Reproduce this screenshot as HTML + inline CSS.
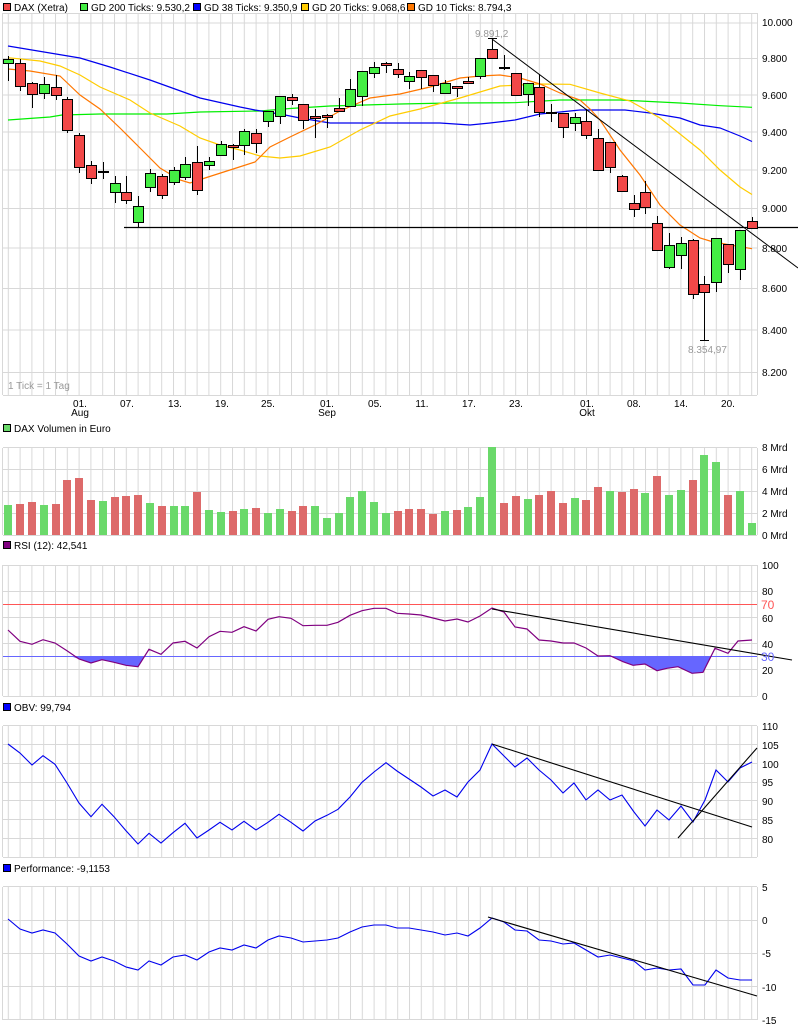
<!DOCTYPE html>
<html><head><meta charset="utf-8"><style>
html,body{margin:0;padding:0;background:#fff;}
svg{display:block;}
text{font-family:"Liberation Sans","DejaVu Sans",sans-serif;font-size:10px;fill:#000;}
.g line{stroke:#d8d8d8;stroke-width:1;}
.w{stroke:#000;stroke-width:1;}
.r{fill:#f24848;stroke:#000;stroke-width:1;}
.u{fill:#44ee44;stroke:#000;stroke-width:1;}
.vr{fill:#dd6a6a;}
.vg{fill:#6ad96a;}
</style></head><body>
<svg width="798" height="1028" viewBox="0 0 798 1028" xmlns="http://www.w3.org/2000/svg">
<defs>
<pattern id="vg" patternUnits="userSpaceOnUse" width="11.8" height="20" x="7.8" y="0">
<line x1="0.5" y1="0" x2="0.5" y2="20" stroke="#d8d8d8" stroke-width="1"/>
</pattern>
</defs>

<rect x="3.5" y="3.5" width="7" height="7" fill="#f24848" stroke="#000"/><text x="14" y="11">DAX (Xetra)</text>
<rect x="80.5" y="3.5" width="7" height="7" fill="#44ee44" stroke="#000"/><text x="91" y="11">GD 200 Ticks: 9.530,2</text>
<rect x="193.5" y="3.5" width="7" height="7" fill="#0000ff" stroke="#000"/><text x="204" y="11">GD 38 Ticks: 9.350,9</text>
<rect x="301.5" y="3.5" width="7" height="7" fill="#ffcc00" stroke="#000"/><text x="312" y="11">GD 20 Ticks: 9.068,6</text>
<rect x="407.5" y="3.5" width="7" height="7" fill="#ff7700" stroke="#000"/><text x="418" y="11">GD 10 Ticks: 8.794,3</text>

<rect x="3" y="13" width="754" height="382" fill="url(#vg)"/>
<g class="g" shape-rendering="crispEdges">
<line x1="2.5" y1="13" x2="2.5" y2="395"/><line x1="757.5" y1="13" x2="757.5" y2="395"/>
<line x1="3" y1="13.5" x2="757" y2="13.5"/>
<line x1="3" y1="23" x2="757" y2="23"/><line x1="3" y1="58.5" x2="757" y2="58.5"/>
<line x1="3" y1="95" x2="757" y2="95"/><line x1="3" y1="132" x2="757" y2="132"/>
<line x1="3" y1="170" x2="757" y2="170"/><line x1="3" y1="208.5" x2="757" y2="208.5"/>
<line x1="3" y1="248" x2="757" y2="248"/><line x1="3" y1="288.5" x2="757" y2="288.5"/>
<line x1="3" y1="330" x2="757" y2="330"/><line x1="3" y1="372.5" x2="757" y2="372.5"/>
<line x1="3" y1="395.5" x2="757" y2="395.5"/>
</g>
<g>
<text x="762" y="26">10.000</text><text x="762" y="62">9.800</text><text x="762" y="99">9.600</text>
<text x="762" y="136">9.400</text><text x="762" y="174">9.200</text><text x="762" y="212">9.000</text>
<text x="762" y="252">8.800</text><text x="762" y="292">8.600</text><text x="762" y="334">8.400</text>
<text x="762" y="376">8.200</text>
</g>
<text x="8" y="389" style="fill:#999">1 Tick = 1 Tag</text>
<g text-anchor="middle">
<text x="80" y="407">01.</text><text x="80" y="416">Aug</text>
<text x="127" y="407">07.</text><text x="175" y="407">13.</text><text x="222" y="407">19.</text>
<text x="268" y="407">25.</text><text x="327" y="407">01.</text><text x="327" y="416">Sep</text>
<text x="375" y="407">05.</text><text x="422" y="407">11.</text><text x="469" y="407">17.</text>
<text x="516" y="407">23.</text><text x="587" y="407">01.</text><text x="587" y="416">Okt</text>
<text x="634" y="407">08.</text><text x="681" y="407">14.</text><text x="728" y="407">20.</text>
</g>

<g fill="none" stroke-width="1.2">
<polyline stroke="#00ee00" points="8,120 50,117 62,115 100,114 167,114 200,112 260,111 290,108.5 330,106 400,104 450,103 515,102.7 560,100 620,100 680,103 720,105.7 752,107.3"/>
<polyline stroke="#0000ee" points="8,46 50,53 80,58 110,67 150,80 200,98 240,107 255,110 285,115 300,118 330,123 400,123 440,123 470,125 490,123 515,120 540,114 580,110 625,110 650,113 680,118 700,125 720,128 740,136 752,141.5"/>
<polyline stroke="#ffcc00" points="8,57.7 40,61 60,66 80,75 100,87 130,100 150,113 180,126 200,138 220,145 240,150 260,156 280,158 300,156 330,147 360,130 390,116 420,109 460,98 500,86 520,85 540,84 570,84.3 600,93 630,101 660,118 700,150 720,170 740,187 752,194.5"/>
<polyline stroke="#ff7700" points="8,69 30,71 60,76 80,95 100,109 120,128 140,148 160,168 180,180 190,183 205,178 230,170 255,162 270,147 290,137 315,125 340,111 370,98 400,94 430,87 460,78 480,76 500,75 520,78 540,84 560,93 580,100 590,109 600,120 620,150 640,175 660,205 680,225 700,238 710,241 730,245 752,248.7"/>
</g>
<line x1="124" y1="227.5" x2="798" y2="227.5" stroke="#000" stroke-width="1.2"/>
<line x1="492" y1="39" x2="798" y2="268" stroke="#000" stroke-width="1"/>

<g>
<line class="w" x1="8.5" y1="56" x2="8.5" y2="81"/><rect class="u" x="3.5" y="59.5" width="10" height="4"/>
<line class="w" x1="20.5" y1="59" x2="20.5" y2="91"/><rect class="r" x="15.5" y="63.5" width="10" height="23"/>
<line class="w" x1="32.5" y1="82" x2="32.5" y2="108"/><rect class="r" x="27.5" y="83.5" width="10" height="11"/>
<line class="w" x1="44.5" y1="77" x2="44.5" y2="99"/><rect class="u" x="39.5" y="84.5" width="10" height="9"/>
<line class="w" x1="56.5" y1="75" x2="56.5" y2="100"/><rect class="r" x="51.5" y="87.5" width="10" height="8"/>
<line class="w" x1="67.5" y1="97" x2="67.5" y2="133"/><rect class="r" x="62.5" y="99.5" width="10" height="31"/>
<line class="w" x1="79.5" y1="133" x2="79.5" y2="173"/><rect class="r" x="74.5" y="135.5" width="10" height="32"/>
<line class="w" x1="91.5" y1="161" x2="91.5" y2="184"/><rect class="r" x="86.5" y="165.5" width="10" height="13"/>
<line class="w" x1="103.5" y1="162" x2="103.5" y2="179"/><rect x="98" y="171" width="11" height="2" fill="#000"/>
<line class="w" x1="115.5" y1="176" x2="115.5" y2="203"/><rect class="u" x="110.5" y="183.5" width="10" height="9"/>
<line class="w" x1="126.5" y1="176" x2="126.5" y2="204"/><rect class="r" x="121.5" y="192.5" width="10" height="8"/>
<line class="w" x1="138.5" y1="196" x2="138.5" y2="227"/><rect class="u" x="133.5" y="206.5" width="10" height="16"/>
<line class="w" x1="150.5" y1="169" x2="150.5" y2="192"/><rect class="u" x="145.5" y="173.5" width="10" height="14"/>
<line class="w" x1="162.5" y1="174" x2="162.5" y2="199"/><rect class="r" x="157.5" y="176.5" width="10" height="19"/>
<line class="w" x1="174.5" y1="167" x2="174.5" y2="185"/><rect class="u" x="169.5" y="170.5" width="10" height="12"/>
<line class="w" x1="185.5" y1="157" x2="185.5" y2="180"/><rect class="u" x="180.5" y="164.5" width="10" height="13"/>
<line class="w" x1="197.5" y1="146" x2="197.5" y2="195"/><rect class="r" x="192.5" y="162.5" width="10" height="28"/>
<line class="w" x1="209.5" y1="157" x2="209.5" y2="170"/><rect class="u" x="204.5" y="161.5" width="10" height="4"/>
<line class="w" x1="221.5" y1="141" x2="221.5" y2="155"/><rect class="u" x="216.5" y="144.5" width="10" height="11"/>
<line class="w" x1="233.5" y1="144" x2="233.5" y2="160"/><rect class="r" x="228.5" y="145.5" width="10" height="2"/>
<line class="w" x1="244.5" y1="129" x2="244.5" y2="155"/><rect class="u" x="239.5" y="131.5" width="10" height="14"/>
<line class="w" x1="256.5" y1="129" x2="256.5" y2="153"/><rect class="r" x="251.5" y="133.5" width="10" height="10"/>
<line class="w" x1="268.5" y1="111" x2="268.5" y2="127"/><rect class="u" x="263.5" y="111.5" width="10" height="10"/>
<line class="w" x1="280.5" y1="96" x2="280.5" y2="124"/><rect class="u" x="275.5" y="96.5" width="10" height="20"/>
<line class="w" x1="292.5" y1="94" x2="292.5" y2="105"/><rect class="r" x="287.5" y="97.5" width="10" height="3"/>
<line class="w" x1="303.5" y1="104" x2="303.5" y2="129"/><rect class="r" x="298.5" y="104.5" width="10" height="16"/>
<line class="w" x1="315.5" y1="109" x2="315.5" y2="138"/><rect class="r" x="310.5" y="116.5" width="10" height="2"/>
<line class="w" x1="327.5" y1="114" x2="327.5" y2="128"/><rect class="r" x="322.5" y="115.5" width="10" height="2"/>
<line class="w" x1="339.5" y1="98" x2="339.5" y2="111"/><rect class="r" x="334.5" y="108.5" width="10" height="3"/>
<line class="w" x1="350.5" y1="79" x2="350.5" y2="106"/><rect class="u" x="345.5" y="89.5" width="10" height="17"/>
<line class="w" x1="362.5" y1="71" x2="362.5" y2="106"/><rect class="u" x="357.5" y="71.5" width="10" height="25"/>
<line class="w" x1="374.5" y1="62" x2="374.5" y2="78"/><rect class="u" x="369.5" y="67.5" width="10" height="6"/>
<line class="w" x1="386.5" y1="62" x2="386.5" y2="73"/><rect class="r" x="381.5" y="63.5" width="10" height="2"/>
<line class="w" x1="398.5" y1="63" x2="398.5" y2="78"/><rect class="r" x="393.5" y="69.5" width="10" height="5"/>
<line class="w" x1="409.5" y1="72" x2="409.5" y2="89"/><rect class="u" x="404.5" y="76.5" width="10" height="5"/>
<line class="w" x1="421.5" y1="70" x2="421.5" y2="89"/><rect class="r" x="416.5" y="70.5" width="10" height="7"/>
<line class="w" x1="433.5" y1="75" x2="433.5" y2="92"/><rect class="r" x="428.5" y="75.5" width="10" height="10"/>
<line class="w" x1="445.5" y1="80" x2="445.5" y2="93"/><rect class="u" x="440.5" y="83.5" width="10" height="10"/>
<line class="w" x1="457.5" y1="86" x2="457.5" y2="97"/><rect class="r" x="452.5" y="86.5" width="10" height="2"/>
<line class="w" x1="468.5" y1="77" x2="468.5" y2="83"/><rect class="r" x="463.5" y="81.5" width="10" height="2"/>
<line class="w" x1="480.5" y1="58" x2="480.5" y2="79"/><rect class="u" x="475.5" y="58.5" width="10" height="18"/>
<line class="w" x1="492.5" y1="38" x2="492.5" y2="58"/><rect class="r" x="487.5" y="49.5" width="10" height="9"/><line class="w" x1="488" y1="38.5" x2="497" y2="38.5"/>
<line class="w" x1="504.5" y1="55" x2="504.5" y2="70"/><rect x="499" y="67" width="11" height="2" fill="#000"/>
<line class="w" x1="516.5" y1="73" x2="516.5" y2="95"/><rect class="r" x="511.5" y="73.5" width="10" height="22"/>
<line class="w" x1="528.5" y1="83" x2="528.5" y2="106"/><rect class="u" x="523.5" y="83.5" width="10" height="11"/>
<line class="w" x1="539.5" y1="74" x2="539.5" y2="117"/><rect class="r" x="534.5" y="87.5" width="10" height="25"/>
<line class="w" x1="551.5" y1="104" x2="551.5" y2="122"/><rect x="546" y="112" width="11" height="2" fill="#000"/>
<line class="w" x1="563.5" y1="113" x2="563.5" y2="138"/><rect class="r" x="558.5" y="113.5" width="10" height="14"/>
<line class="w" x1="575.5" y1="113" x2="575.5" y2="131"/><rect class="u" x="570.5" y="117.5" width="10" height="6"/>
<line class="w" x1="586.5" y1="109" x2="586.5" y2="139"/><rect class="r" x="581.5" y="121.5" width="10" height="14"/>
<line class="w" x1="598.5" y1="129" x2="598.5" y2="170"/><rect class="r" x="593.5" y="138.5" width="10" height="32"/>
<line class="w" x1="610.5" y1="142" x2="610.5" y2="173"/><rect class="r" x="605.5" y="142.5" width="10" height="25"/>
<line class="w" x1="622.5" y1="175" x2="622.5" y2="192"/><rect class="r" x="617.5" y="176.5" width="10" height="15"/>
<line class="w" x1="634.5" y1="195" x2="634.5" y2="217"/><rect class="r" x="629.5" y="203.5" width="10" height="6"/>
<line class="w" x1="645.5" y1="181" x2="645.5" y2="214"/><rect class="r" x="640.5" y="192.5" width="10" height="15"/>
<line class="w" x1="657.5" y1="216" x2="657.5" y2="250"/><rect class="r" x="652.5" y="223.5" width="10" height="27"/>
<line class="w" x1="669.5" y1="233" x2="669.5" y2="269"/><rect class="u" x="664.5" y="245.5" width="10" height="22"/>
<line class="w" x1="681.5" y1="237" x2="681.5" y2="269"/><rect class="u" x="676.5" y="243.5" width="10" height="12"/>
<line class="w" x1="693.5" y1="239" x2="693.5" y2="299"/><rect class="r" x="688.5" y="240.5" width="10" height="54"/>
<line class="w" x1="704.5" y1="276" x2="704.5" y2="340"/><rect class="r" x="699.5" y="284.5" width="10" height="8"/><line class="w" x1="700" y1="340.5" x2="709" y2="340.5"/>
<line class="w" x1="716.5" y1="238" x2="716.5" y2="292"/><rect class="u" x="711.5" y="238.5" width="10" height="44"/>
<line class="w" x1="728.5" y1="244" x2="728.5" y2="273"/><rect class="r" x="723.5" y="244.5" width="10" height="20"/>
<line class="w" x1="740.5" y1="230" x2="740.5" y2="280"/><rect class="u" x="735.5" y="230.5" width="10" height="39"/>
<line class="w" x1="752.5" y1="217" x2="752.5" y2="228"/><rect class="r" x="747.5" y="221.5" width="10" height="7"/>
</g>
<text x="475" y="37" style="fill:#999">9.891,2</text>
<text x="688" y="353" style="fill:#999">8.354,97</text>

<rect x="3.5" y="424.5" width="7" height="7" fill="#6ad96a" stroke="#000"/><text x="14" y="432">DAX Volumen in Euro</text>
<rect x="3" y="448" width="754" height="87" fill="url(#vg)"/>
<g class="g" shape-rendering="crispEdges">
<line x1="2.5" y1="448" x2="2.5" y2="535"/><line x1="757.5" y1="448" x2="757.5" y2="535"/>
<line x1="3" y1="447.5" x2="757" y2="447.5"/><line x1="3" y1="469.5" x2="757" y2="469.5"/>
<line x1="3" y1="491.5" x2="757" y2="491.5"/><line x1="3" y1="513.5" x2="757" y2="513.5"/>
<line x1="3" y1="535.5" x2="757" y2="535.5"/>
</g>
<g>
<text x="762" y="451">8 Mrd</text><text x="762" y="473">6 Mrd</text><text x="762" y="495">4 Mrd</text>
<text x="762" y="517">2 Mrd</text><text x="762" y="539">0 Mrd</text>
</g>
<g>
<rect class="vg" x="4" y="505" width="8" height="30"/><rect class="vr" x="16" y="504" width="8" height="31"/>
<rect class="vr" x="28" y="502" width="8" height="33"/><rect class="vg" x="40" y="505" width="8" height="30"/>
<rect class="vr" x="52" y="504" width="8" height="31"/><rect class="vr" x="63" y="480" width="8" height="55"/>
<rect class="vr" x="75" y="478" width="8" height="57"/><rect class="vr" x="87" y="500" width="8" height="35"/>
<rect class="vg" x="99" y="501" width="8" height="34"/><rect class="vr" x="111" y="497" width="8" height="38"/>
<rect class="vr" x="122" y="496" width="8" height="39"/><rect class="vr" x="134" y="495" width="8" height="40"/>
<rect class="vg" x="146" y="503" width="8" height="32"/><rect class="vr" x="158" y="506" width="8" height="29"/>
<rect class="vg" x="170" y="506" width="8" height="29"/><rect class="vg" x="181" y="506" width="8" height="29"/>
<rect class="vr" x="193" y="492" width="8" height="43"/><rect class="vg" x="205" y="510" width="8" height="25"/>
<rect class="vg" x="217" y="512" width="8" height="23"/><rect class="vr" x="229" y="511" width="8" height="24"/>
<rect class="vg" x="240" y="509" width="8" height="26"/><rect class="vr" x="252" y="508" width="8" height="27"/>
<rect class="vg" x="264" y="513" width="8" height="22"/><rect class="vg" x="276" y="509" width="8" height="26"/>
<rect class="vr" x="288" y="511" width="8" height="24"/><rect class="vr" x="299" y="506" width="8" height="29"/>
<rect class="vg" x="311" y="506" width="8" height="29"/><rect class="vg" x="323" y="518" width="8" height="17"/>
<rect class="vg" x="335" y="513" width="8" height="22"/><rect class="vg" x="346" y="497" width="8" height="38"/>
<rect class="vg" x="358" y="491" width="8" height="44"/><rect class="vg" x="370" y="502" width="8" height="33"/>
<rect class="vg" x="382" y="513" width="8" height="22"/><rect class="vr" x="394" y="511" width="8" height="24"/>
<rect class="vr" x="405" y="509" width="8" height="26"/><rect class="vr" x="417" y="509" width="8" height="26"/>
<rect class="vr" x="429" y="514" width="8" height="21"/><rect class="vg" x="441" y="511" width="8" height="24"/>
<rect class="vr" x="453" y="510" width="8" height="25"/><rect class="vg" x="464" y="507" width="8" height="28"/>
<rect class="vg" x="476" y="497" width="8" height="38"/><rect class="vg" x="488" y="447" width="8" height="88"/>
<rect class="vr" x="500" y="503" width="8" height="32"/><rect class="vr" x="512" y="496" width="8" height="39"/>
<rect class="vg" x="524" y="499" width="8" height="36"/><rect class="vr" x="535" y="495" width="8" height="40"/>
<rect class="vr" x="547" y="491" width="8" height="44"/><rect class="vr" x="559" y="503" width="8" height="32"/>
<rect class="vg" x="571" y="498" width="8" height="37"/><rect class="vr" x="582" y="500" width="8" height="35"/>
<rect class="vr" x="594" y="487" width="8" height="48"/><rect class="vg" x="606" y="491" width="8" height="44"/>
<rect class="vr" x="618" y="492" width="8" height="43"/><rect class="vr" x="630" y="489" width="8" height="46"/>
<rect class="vg" x="641" y="493" width="8" height="42"/><rect class="vr" x="653" y="476" width="8" height="59"/>
<rect class="vg" x="665" y="495" width="8" height="40"/><rect class="vg" x="677" y="490" width="8" height="45"/>
<rect class="vr" x="689" y="480" width="8" height="55"/><rect class="vg" x="700" y="455" width="8" height="80"/>
<rect class="vg" x="712" y="462" width="8" height="73"/><rect class="vr" x="724" y="495" width="8" height="40"/>
<rect class="vg" x="736" y="491" width="8" height="44"/><rect class="vg" x="748" y="523" width="8" height="12"/>
</g>

<rect x="3.5" y="541.5" width="7" height="7" fill="#800080" stroke="#000"/><text x="14" y="549">RSI (12): 42,541</text>
<rect x="3" y="565" width="754" height="131" fill="url(#vg)"/>
<g class="g" shape-rendering="crispEdges">
<line x1="2.5" y1="565" x2="2.5" y2="696"/><line x1="757.5" y1="565" x2="757.5" y2="696"/>
<line x1="3" y1="565.5" x2="757" y2="565.5"/><line x1="3" y1="591.5" x2="757" y2="591.5"/>
<line x1="3" y1="617.5" x2="757" y2="617.5"/><line x1="3" y1="643.5" x2="757" y2="643.5"/>
<line x1="3" y1="669.5" x2="757" y2="669.5"/><line x1="3" y1="696.5" x2="757" y2="696.5"/>
</g>
<line x1="3" y1="604.5" x2="757" y2="604.5" stroke="#ff5555"/>
<polygon fill="#6666ff" points="70,656 79,659 91,663 102,659.7 114,662.3 126,665.3 138,666.7 145,656"/>
<polygon fill="#6666ff" points="597,656 610,655.7 623,661.7 633,665.3 645,664 657,670.7 667,668.3 678,666.7 692,673.3 703,672.3 711,656"/>
<line x1="3" y1="656.5" x2="757" y2="656.5" stroke="#6666ff"/>
<polyline fill="none" stroke="#800080" stroke-width="1.2" points="8,630 20,641.3 32,644.3 43,639.7 55,643 67,650.7 79,659 91,663 102,659.7 114,662.3 126,665.3 138,666.7 149,649.3 161,654.3 173,643 185,641.3 197,648 209,636.7 220,631.3 232,632.3 244,626.7 256,631 268,619.3 279,616.7 291,618.3 303,625.7 315,625.3 327,625.3 338,622.3 350,615.3 362,610.7 374,608.3 386,608.3 397,613.3 409,614 421,615 433,618 445,621 457,619 468,622 480,616 492,608 504,612 515,627 527,629 539,640 551,641 563,643 574,643 586,648 598,656 610,655.7 623,661.7 633,665.3 645,664 657,670.7 667,668.3 678,666.7 692,673.3 703,672.3 715,648.3 728,653.3 738,641 752,640"/>
<line x1="492" y1="609" x2="792" y2="660" stroke="#000" stroke-width="1.1"/>
<g>
<text x="762" y="569">100</text><text x="762" y="595">80</text><text x="762" y="622">60</text>
<text x="762" y="648">40</text><text x="762" y="674">20</text><text x="762" y="700">0</text>
<text x="761" y="609" style="fill:#ff5555;font-size:12px">70</text>
<text x="761" y="661" style="fill:#6666ff;font-size:12px">30</text>
</g>

<rect x="3.5" y="703.5" width="7" height="7" fill="#0000ff" stroke="#000"/><text x="14" y="711">OBV: 99,794</text>
<rect x="3" y="726" width="754" height="131" fill="url(#vg)"/>
<g class="g" shape-rendering="crispEdges">
<line x1="2.5" y1="726" x2="2.5" y2="857"/><line x1="757.5" y1="726" x2="757.5" y2="857"/>
<line x1="3" y1="725.5" x2="757" y2="725.5"/><line x1="3" y1="744.5" x2="757" y2="744.5"/>
<line x1="3" y1="763.5" x2="757" y2="763.5"/><line x1="3" y1="782.5" x2="757" y2="782.5"/>
<line x1="3" y1="800.5" x2="757" y2="800.5"/><line x1="3" y1="819.5" x2="757" y2="819.5"/>
<line x1="3" y1="838.5" x2="757" y2="838.5"/><line x1="3" y1="857.5" x2="757" y2="857.5"/>
</g>
<polyline fill="none" stroke="#0000ee" stroke-width="1.1" points="8,744 20,753 32,765 43,755.7 55,764.3 67,783 79,803 91,816.7 102,804.3 114,816.7 126,830.7 138,844 149,833.3 161,843 173,832.7 185,823.3 197,838 209,830 220,822.3 232,830 244,821.3 256,830 268,822.3 279,814.3 291,822.3 303,831 315,821 327,815.3 338,809.3 350,797 362,782.3 374,772 386,762.7 397,771 409,779 421,787 433,796 445,790 457,797 468,782 480,770 492,744 504,756 515,767 527,758 539,770 551,780 563,793 574,783 586,800 598,790 610,800 622,795 634,812 645,826 657,810 669,820 681,806 693,822 705,800 716,770 728,782 740,768 752,762"/>
<line x1="492" y1="744" x2="752" y2="827" stroke="#000" stroke-width="1.1"/>
<line x1="678" y1="838" x2="757" y2="748" stroke="#000" stroke-width="1.1"/>
<g>
<text x="762" y="730">110</text><text x="762" y="749">105</text><text x="762" y="768">100</text>
<text x="762" y="786">95</text><text x="762" y="805">90</text><text x="762" y="824">85</text><text x="762" y="843">80</text>
</g>

<rect x="3.5" y="864.5" width="7" height="7" fill="#0000ff" stroke="#000"/><text x="14" y="872">Performance: -9,1153</text>
<rect x="3" y="887" width="754" height="133" fill="url(#vg)"/>
<g class="g" shape-rendering="crispEdges">
<line x1="2.5" y1="887" x2="2.5" y2="1020"/><line x1="757.5" y1="887" x2="757.5" y2="1020"/>
<line x1="3" y1="886.5" x2="757" y2="886.5"/><line x1="3" y1="920.5" x2="757" y2="920.5"/>
<line x1="3" y1="953.5" x2="757" y2="953.5"/><line x1="3" y1="986.5" x2="757" y2="986.5"/>
<line x1="3" y1="1019.5" x2="757" y2="1019.5"/>
</g>
<polyline fill="none" stroke="#0000ee" stroke-width="1.1" points="8,919 20,929 32,933 43,930 55,933 67,944 79,956 91,961 102,957 114,961 126,967 138,970 149,961 161,965 173,957 185,955 197,960 209,952 220,948 232,950 244,945 256,948 268,940 279,936 291,938 303,942 315,941 327,940 338,938 350,932 362,927 374,925 386,925 397,928 409,928 421,930 433,932 445,935 457,933 468,936 480,928 492,918 504,922 515,930 527,931 539,940 551,941 563,944 574,943 586,950 598,957 610,955 622,958 634,961 645,970 657,968 669,970 681,969 693,985 705,985 716,970 728,978 740,980 752,980"/>
<line x1="488" y1="917" x2="757" y2="996" stroke="#000" stroke-width="1.1"/>
<g>
<text x="762" y="891">5</text><text x="762" y="924">0</text><text x="762" y="957">-5</text>
<text x="762" y="991">-10</text><text x="762" y="1024">-15</text>
</g>
</svg>
</body></html>
